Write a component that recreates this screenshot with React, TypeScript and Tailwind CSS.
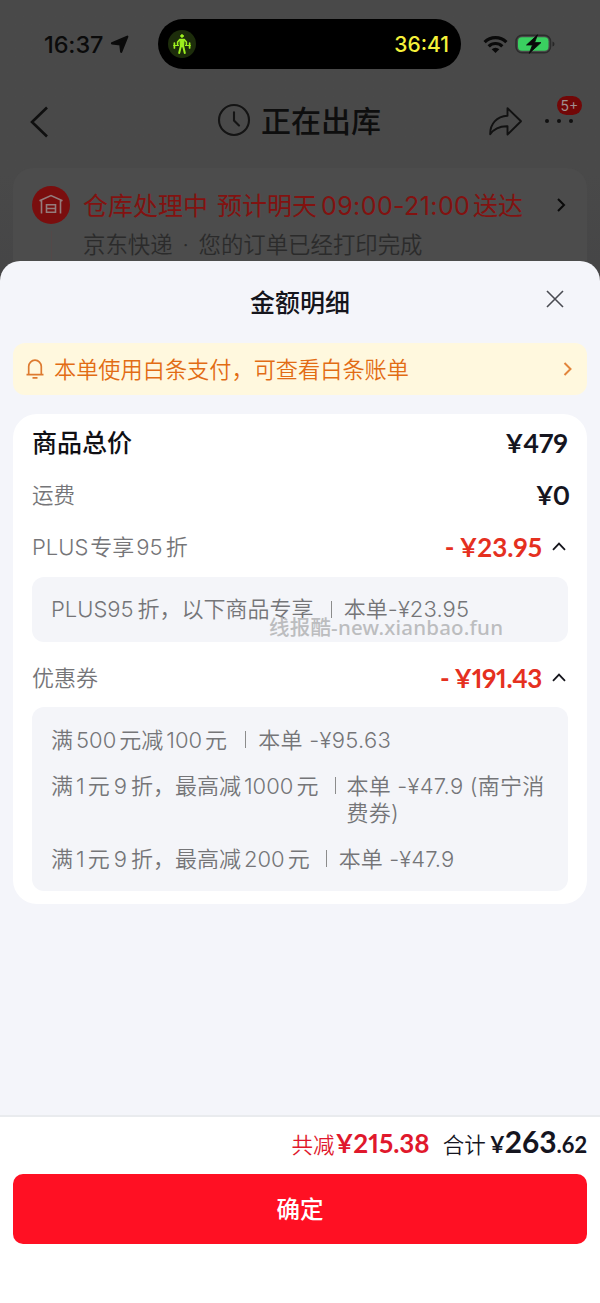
import React from "react";

function Yuan({ children, className = "" }: { children: React.ReactNode; className?: string }) {
  return (
    <span className={`font-['Lato','Noto_Sans_CJK_SC',sans-serif] font-bold proportional-nums whitespace-nowrap ${className}`}>
      {children}
    </span>
  );
}

function Num({ children, className = "mx-[3px]" }: { children: React.ReactNode; className?: string }) {
  return <span className={className}>{children}</span>;
}

function ChevronUp() {
  return (
    <svg className="w-[14px] h-[9px]" viewBox="0 0 14 9" fill="none" stroke="#15151c" strokeWidth="1.8">
      <path d="M1 7.8 7 1.6l6 6.2" />
    </svg>
  );
}

function StatusBar() {
  return (
    <div className="relative h-[88px] flex items-center">
      <span className="ml-[44px] mt-px w-[60px] text-[23.5px] font-medium text-[#0b0b0b] tracking-[-0.1px] whitespace-nowrap">
        16:37
      </span>
      <svg className="ml-[6px] w-[19px] h-[19px]" viewBox="0 0 19 19">
        <path d="M17.300 1.700 11.200 16.800 10.300 9.300 2 8.300z" fill="#0b0b0b" stroke="#0b0b0b" strokeWidth="2.200" strokeLinejoin="round" />
      </svg>

      {/* Dynamic island */}
      <div className="ml-[29px] w-[303px] h-[50px] rounded-full bg-black flex items-center justify-between pl-[10px] pr-[12px]">
        <svg className="w-[28px] h-[28px]" viewBox="0 0 28 28">
          <circle cx="14" cy="14" r="14" fill="#1d2d0b" />
          <g stroke="#9df01f" strokeLinecap="round" strokeLinejoin="round" fill="none">
            <circle cx="14" cy="6" r="1.3" fill="#9df01f" strokeWidth="1" />
            <path d="M12 9.5h4l-.5 7h-3z" fill="#9df01f" strokeWidth="1.3" />
            <path d="M11.8 9.5 9.6 12v2.6M16.2 9.5l2.2 2.5v2.6" strokeWidth="1.6" />
            <path d="m12.6 17-1.4 6M15.4 17l1.4 6" strokeWidth="2" />
            <path d="M5.6 15.5h5M17.4 15.5h5" strokeWidth="1" />
            <path d="M6.4 13v5M21.6 13v5" strokeWidth="1.7" />
          </g>
        </svg>
        <span className="mt-px text-[21px] font-medium text-[#f5f13a]">36:41</span>
      </div>

      <svg className="ml-[22px] w-[25px] h-[19px]" viewBox="0 0 25 19" fill="none" stroke="#0a0a0a" strokeWidth="3.2">
        <path d="M1.6 7.2a15.5 15.5 0 0 1 21.8 0" />
        <path d="M5.7 11.3a9.7 9.7 0 0 1 13.6 0" />
        <path d="m12.5 18-3.8-3.7a5.5 5.5 0 0 1 7.6 0z" fill="#0a0a0a" stroke="none" />
      </svg>
      <svg className="ml-[7px] w-[40px] h-[20px]" viewBox="0 0 40 20">
        <rect x="1" y="1.2" width="34.5" height="17.6" rx="6" fill="none" stroke="#2c2c2c" strokeWidth="1.5" />
        <rect x="3" y="3.2" width="30.5" height="13.6" rx="4" fill="#3ad060" />
        <path d="M37.5 7.5q2 .5 2 2.5t-2 2.5z" fill="#272727" />
        <path d="M22.5.8 11.5 11h6l-3.3 8.4L26 8.6h-6.4z" fill="#0a0a0a" stroke="#0a0a0a" strokeWidth=".8" strokeLinejoin="round" />
      </svg>
    </div>
  );
}

function NavBar() {
  return (
    <div className="relative h-[66px] flex items-center justify-center">
      <svg className="absolute left-[29px] top-[18px] w-[20px] h-[32px]" viewBox="0 0 20 32" fill="none" stroke="#0f0f0f" strokeWidth="2.6">
        <path d="M18 1.5 3 16l15 14.500" />
      </svg>
      <svg className="-ml-[2px] w-[34px] h-[34px] mt-[-3px]" viewBox="0 0 34 34" fill="none" stroke="#141414" strokeWidth="2.1" strokeLinecap="round">
        <circle cx="17" cy="17" r="15" />
        <path d="M17 9.3v8.2l5 5" />
      </svg>
      <h1 className="ml-[10px] text-[30px] leading-[44px] font-medium text-[#0e0e0e]">正在出库</h1>
      <svg className="absolute left-[488px] top-[18px] w-[35px] h-[31px]" viewBox="0 0 35 31" fill="none" stroke="#121212" strokeWidth="1.9" strokeLinejoin="round">
        <path d="M19.5 2.2 33 15.2 19.5 28.5v-8.3C11.5 20 6 22.5 2.2 28.3 2 18 8.500 10.500 19.500 9.800z" />
      </svg>
      <div className="absolute left-[545px] top-[31px] flex gap-[8px]">
        <i className="w-[4px] h-[4px] rounded-full bg-[#101010]" />
        <i className="w-[4px] h-[4px] rounded-full bg-[#101010]" />
        <i className="w-[4px] h-[4px] rounded-full bg-[#101010]" />
      </div>
      <span className="absolute left-[557px] top-[8px] w-[25px] h-[19px] rounded-full bg-[#720707] text-[#a09090] text-[14px] leading-[19px] text-center">
        5+
      </span>
    </div>
  );
}

function OrderStatus() {
  return (
    <div className="mt-[14px] mx-[13px] h-[122px] rounded-t-[20px] bg-[#4c4c4c] pl-[19px] flex">
      <div className="w-[38px] flex flex-col items-center">
        <svg className="mt-[18px] w-[38px] h-[38px] shrink-0" viewBox="0 0 38 38">
          <circle cx="19" cy="19" r="19" fill="#7a0e0e" />
          <path d="M7.500 14.800 19 9.600l11.500 5.200M9.500 14.500v13M28.500 14.500v13M14.500 27v-8.200h9V27M14.500 22.500h9M14.500 26.200h9" fill="none" stroke="#947c7c" strokeWidth="1.6" />
        </svg>
        <div className="mt-[7px] w-px h-[40px] bg-[#544848]" />
      </div>
      <div className="ml-[13px] flex-1">
        <div className="mt-[20px] flex items-center h-[37px] text-[25px] text-[#821210] whitespace-nowrap">
          仓库处理中
          <span className="ml-[9px]">预计明天</span>
          <span className="ml-[4px] w-[152px] tracking-[0.4px]">09:00-21:00</span>
          送达
        </div>
        <div className="mt-[4px] text-[22.400px] leading-[32px] font-[350] text-[#2b2b2b] whitespace-nowrap">
          京东快递<span className="inline-block w-[26px] text-center">·</span>您的订单已经打印完成
        </div>
      </div>
      <svg className="mr-[21px] mt-[30px] w-[10px] h-[14px]" viewBox="0 0 10 14" fill="none" stroke="#0a0a0a" strokeWidth="2">
        <path d="m2 1 6 6-6 6" />
      </svg>
    </div>
  );
}

function Divider({ className = "" }: { className?: string }) {
  return <span className={`inline-block w-px h-[17px] bg-[#8c8c8c] ${className}`} />;
}

export default function App() {
  return (
    <div className="relative w-[600px] h-[1303px] overflow-hidden flex flex-col bg-[#f4f5fa] font-['Inter','Noto_Sans_CJK_SC',sans-serif]">
      <header className="h-[290px] shrink-0 bg-linear-to-b from-[#494949] from-60% to-[#454546]">
        <StatusBar />
        <NavBar />
        <OrderStatus />
      </header>

      <main className="relative -mt-[29px] flex-1 rounded-t-[20px] bg-[#f4f5fa] flex flex-col">
        <div className="h-[82px] flex items-center justify-center relative">
          <h2 className="mt-[2px] text-[25px] leading-[36px] font-medium text-[#15151c]">金额明细</h2>
          <svg className="absolute right-[36px] top-[29px] w-[18px] h-[18px]" viewBox="0 0 18 18" stroke="#4a4b52" strokeWidth="1.6">
            <path d="m1 1 16 16M17 1 1 17" />
          </svg>
        </div>

        {/* Baitiao notice */}
        <div className="mx-[13px] h-[52px] rounded-[12px] bg-[#fff8de] flex items-center text-[#e26c14]">
          <svg className="ml-[13px] w-[18px] h-[20px]" viewBox="0 0 18 20" fill="none" stroke="#dd7a2f" strokeWidth="1.7">
            <path d="M.5 15.600h17M2.700 15.500V7.500a6.300 6.300 0 0 1 12.600 0v8M6.500 18.800h5" />
          </svg>
          <span className="ml-[10px] mt-px text-[22.200px] leading-[32px] font-[350]">本单使用白条支付，可查看白条账单</span>
          <svg className="ml-auto mr-[15px] w-[9px] h-[14px]" viewBox="0 0 9 14" fill="none" stroke="#e2853c" strokeWidth="2">
            <path d="m1.500 1 6 6-6 6" />
          </svg>
        </div>

        <section className="mt-[19px] mx-[13px] h-[490px] rounded-[24px] bg-white px-[19px] text-[22px] font-[350] text-[#757578] flex flex-col">
          <div className="mt-[3px] h-[52px] flex items-center justify-between">
            <span className="mt-px text-[25px] font-medium text-[#101014]">商品总价</span>
            <Yuan className="mt-[2px] text-[26.500px] text-[#15151f]">¥479</Yuan>
          </div>
          <div className="h-[52px] flex items-center justify-between">
            <span className="text-[21.500px]">运费</span>
            <Yuan className="mt-px text-[26px] tracking-[-1px] -mr-px text-[#15151f]">¥0</Yuan>
          </div>
          <div className="h-[52px] flex items-center">
            <span>PLUS<Num className="mx-[2px]">专享</Num>95<Num>折</Num></span>
            <Yuan className="ml-auto mr-[10px] text-[26px] text-[#e5301f]">-<span className="ml-[5px]">¥23.95</span></Yuan>
            <span className="mr-[2px] -mt-[2px]"><ChevronUp /></span>
          </div>
          <div className="mt-[4px] h-[65px] rounded-[12px] bg-[#f4f5f9] pl-[19px] flex items-center whitespace-nowrap">
            <span>PLUS95<span className="ml-[4px]">折，以下商品专享</span></span>
            <Divider className="ml-[17px] mr-[12px]" />
            <span className="tracking-[0.1px]">本单-¥23.95</span>
          </div>
          <div className="mt-[10px] h-[52px] flex items-center">
            <span>优惠券</span>
            <Yuan className="ml-auto mr-[10px] text-[26px] tracking-[-0.4px] text-[#e5301f]">-<span className="ml-[5px]">¥191.43</span></Yuan>
            <span className="mr-[2px] -mt-[2px]"><ChevronUp /></span>
          </div>
          <div className="mt-[3px] h-[184px] rounded-[12px] bg-[#f4f5f9] pl-[19px] pt-[20px] leading-[27px] whitespace-nowrap">
            <div className="h-[46px] flex items-start">
              <span>满<Num>500</Num>元减<Num>100</Num>元</span>
              <Divider className="mt-[4px] ml-[18px] mr-[12px]" />
              <span className="tracking-[0.3px]">本单 -¥95.63</span>
            </div>
            <div className="h-[73px] flex items-start">
              <span>满<Num>1</Num>元<Num className="mx-[4px]">9</Num>折，最高减<Num>1000</Num>元</span>
              <Divider className="mt-[4px] ml-[17px] mr-[10px]" />
              <span className="tracking-[0.250px]">本单 -¥47.9 (南宁消<br />费券)</span>
            </div>
            <div className="flex items-start">
              <span>满<Num>1</Num>元<Num className="mx-[4px]">9</Num>折，最高减<Num>200</Num>元</span>
              <Divider className="mt-[4px] ml-[16px] mr-[12px]" />
              <span className="tracking-[0.1px]">本单 -¥47.9</span>
            </div>
          </div>
        </section>

        <footer className="mt-auto h-[188px] bg-white border-t-2 border-[#e9ebee]">
          <div className="h-[57px] pr-[13px] flex items-baseline justify-end pt-[6px] leading-[36px] text-[21.500px] font-[350]">
            <span className="text-[#e0182c]">共减</span>
            <Yuan className="ml-px text-[26px] text-[#e0182c]">¥215.38</Yuan>
            <span className="ml-[13px] mr-[4px] text-[#15151f]">合计</span>
            <Yuan className="text-[22px] text-[#15151f]">¥</Yuan>
            <Yuan className="text-[30px] text-[#15151f]">263</Yuan>
            <Yuan className="text-[22px] text-[#15151f]">.62</Yuan>
          </div>
          <button className="block mx-auto w-[574px] h-[70px] pt-[2px] rounded-[10px] bg-[#ff1023] text-white text-[23.500px] font-medium">
            确定
          </button>
        </footer>
      </main>

      <span className="absolute left-[269px] top-[613px] text-[20.500px] leading-[28px] tracking-[0.200px] font-medium text-[#bcbdbf] whitespace-nowrap font-['Noto_Sans','Noto_Sans_CJK_SC',sans-serif]">
        线报酷-new.xianbao.fun
      </span>
    </div>
  );
}
